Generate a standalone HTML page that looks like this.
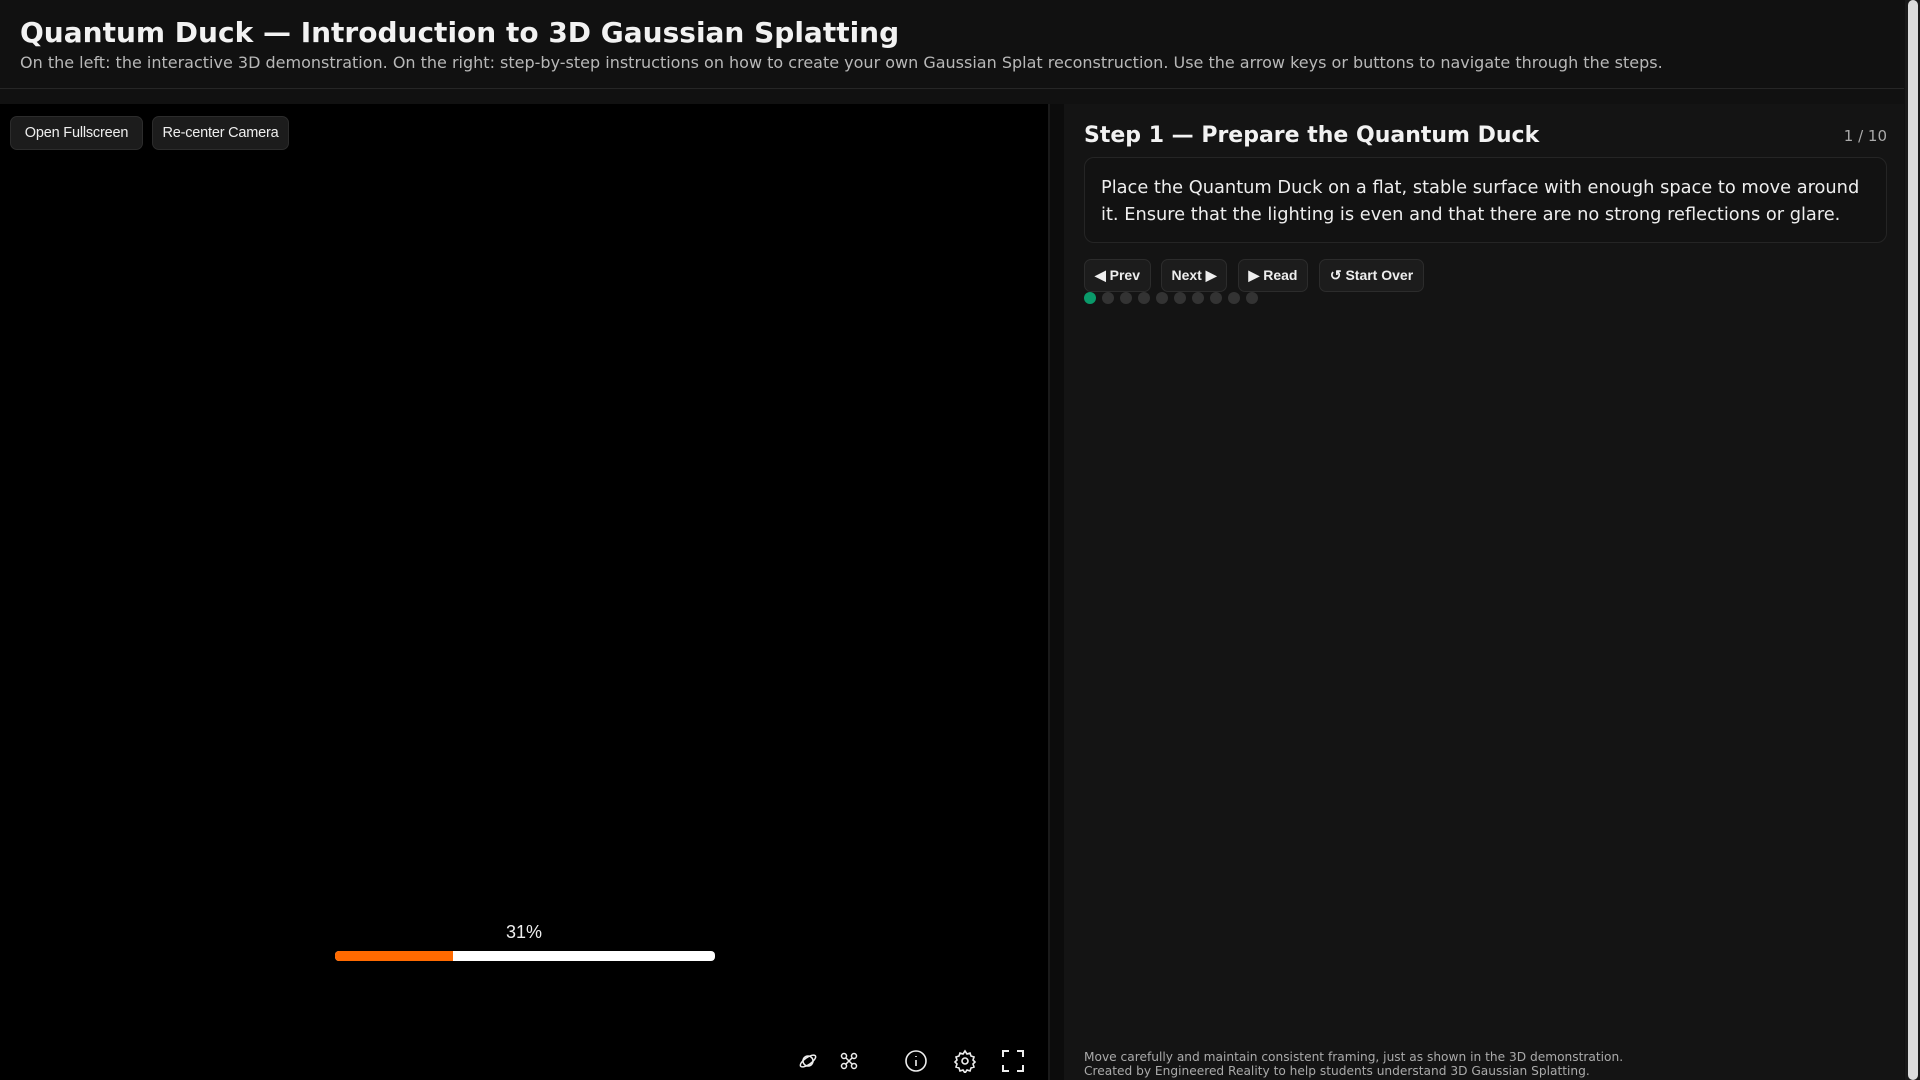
<!DOCTYPE html>
<html><head><meta charset="utf-8"><style>
*{box-sizing:border-box;margin:0;padding:0}
body{width:1920px;height:1080px;overflow:hidden;background:#111;color:#eee;font-family:"DejaVu Sans","Liberation Sans",sans-serif;position:relative}
.h1{position:absolute;left:20px;top:16px;font-size:28px;font-weight:bold;color:#f2f2f2;white-space:nowrap}
.sub{position:absolute;left:20px;top:53px;font-size:16px;color:#b8b8b8;white-space:nowrap}
.hr{position:absolute;left:0;top:88px;width:1904px;height:1px;background:#262626}
.left{position:absolute;left:0;top:104px;width:1048px;height:976px;background:#000}
.sep{position:absolute;left:1048px;top:104px;width:16px;height:976px;background:#0c0c0c;border-left:2px solid #1a1a1a}
.right{position:absolute;left:1064px;top:104px;width:840px;height:976px;background:#141414}
.sb{position:absolute;left:1905px;top:0;width:15px;height:1080px;background:#1a1a1a}
.sb i{position:absolute;left:3px;top:0;width:10px;height:1080px;background:#dcdcdc;border-radius:5px}
.btn{position:absolute;height:33px;background:#1c1c1c;border:1px solid #2c2c2c;border-radius:7px;color:#eee;font-family:"Liberation Sans",sans-serif;font-size:15px;display:flex;align-items:center;justify-content:center}
.n{font-size:14.5px;letter-spacing:-0.2px;height:34px}
.b2{font-weight:bold;font-size:14px}
.st{position:absolute;left:1084px;top:123px;font-size:22px;font-weight:bold;color:#f2f2f2}
.cnt{position:absolute;right:33px;top:127px;font-size:15px;color:#aaa}
.box{position:absolute;left:1084px;top:157px;width:803px;height:86px;border:1px solid #252525;border-radius:10px;background:#121212;padding:16px 16px;font-size:17.8px;line-height:27px;color:#eee}
.dot{position:absolute;top:292px;width:12px;height:12px;border-radius:50%;background:#333}
.pct{position:absolute;left:0;width:1048px;top:922px;text-align:center;font-family:"Liberation Sans",sans-serif;font-size:18px;color:#eee}
.bar{position:absolute;left:335px;top:951px;width:380px;height:10px;background:#fff;border-radius:4px;overflow:hidden}
.bar i{display:block;width:118px;height:10px;background:#ff6a00}
.foot{position:absolute;left:1084px;top:1050px;font-size:12.2px;line-height:14px;color:#aaa}
svg{position:absolute}
</style></head><body>
<div class="h1">Quantum Duck — Introduction to 3D Gaussian Splatting</div>
<div class="sub">On the left: the interactive 3D demonstration. On the right: step-by-step instructions on how to create your own Gaussian Splat reconstruction. Use the arrow keys or buttons to navigate through the steps.</div>
<div class="hr"></div>
<div class="left"></div>
<div class="sep"></div>
<div class="right"></div>
<div class="sb"><i></i></div>
<div class="btn n" style="left:10px;top:116px;width:133px">Open Fullscreen</div>
<div class="btn n" style="left:152px;top:116px;width:137px">Re-center Camera</div>
<div class="st">Step 1 — Prepare the Quantum Duck</div>
<div class="cnt">1 / 10</div>
<div class="box">Place the Quantum Duck on a flat, stable surface with enough space to move around it. Ensure that the lighting is even and that there are no strong reflections or glare.</div>
<div class="btn b2" style="left:1084px;top:259px;width:67px">◀ Prev</div>
<div class="btn b2" style="left:1161px;top:259px;width:66px">Next ▶</div>
<div class="btn b2" style="left:1238px;top:259px;width:70px">▶ Read</div>
<div class="btn b2" style="left:1319px;top:259px;width:105px">↺ Start Over</div>
<div class="dot" style="left:1084px;background:#0a9a6a"></div>
<div class="dot" style="left:1102px"></div>
<div class="dot" style="left:1120px"></div>
<div class="dot" style="left:1138px"></div>
<div class="dot" style="left:1156px"></div>
<div class="dot" style="left:1174px"></div>
<div class="dot" style="left:1192px"></div>
<div class="dot" style="left:1210px"></div>
<div class="dot" style="left:1228px"></div>
<div class="dot" style="left:1246px"></div>
<div class="pct">31%</div>
<div class="bar"><i></i></div>
<svg style="left:798px;top:1051px" width="20" height="20" viewBox="0 0 20 20" fill="none" stroke="#eee" stroke-width="1.5"><circle cx="10" cy="10" r="5"/><ellipse cx="10" cy="10" rx="9" ry="3.5" transform="rotate(-35 10 10)"/></svg>
<svg style="left:839px;top:1051px" width="20" height="20" viewBox="0 0 20 20" fill="none" stroke="#eee" stroke-width="1.5"><circle cx="5" cy="5" r="2.5"/><circle cx="15" cy="5" r="2.5"/><circle cx="5" cy="15" r="2.5"/><circle cx="15" cy="15" r="2.5"/><path d="M7 7l6 6M13 7l-6 6"/></svg>
<svg style="left:904px;top:1049px" width="24" height="24" viewBox="0 0 24 24" fill="none" stroke="#eee" stroke-width="1.6"><circle cx="12" cy="12" r="10"/><path d="M12 11v6M12 7v1"/></svg>
<svg style="left:953px;top:1049px" width="24" height="24" viewBox="0 0 24 24" fill="none" stroke="#eee" stroke-width="1.6"><circle cx="12" cy="12" r="3"/><path d="M12 2l2 3 3-1 1 3 3 1-1 3 2 2-2 2 1 3-3 1-1 3-3-1-2 3-2-3-3 1-1-3-3-1 1-3-2-2 2-2-1-3 3-1 1-3 3 1z"/></svg>
<svg style="left:1002px;top:1050px" width="22" height="22" viewBox="0 0 22 22" fill="none" stroke="#eee" stroke-width="2"><path d="M1 7V1h6M15 1h6v6M21 15v6h-6M7 21H1v-6"/></svg>
<div class="foot">Move carefully and maintain consistent framing, just as shown in the 3D demonstration.<br>Created by Engineered Reality to help students understand 3D Gaussian Splatting.</div>
</body></html>
